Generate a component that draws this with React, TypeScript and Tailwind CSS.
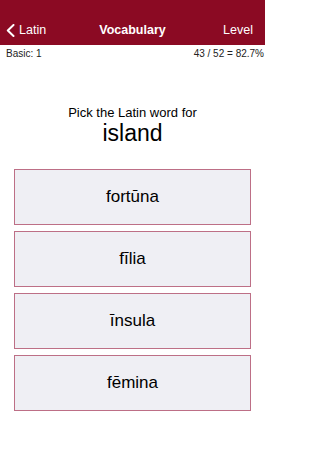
import React from "react";

const words = ["fortūna", "fīlia", "īnsula", "fēmina"];

export default function App() {
  return (
    <div
      className="w-[265px] h-[471px] bg-white overflow-hidden"
      style={{ fontFamily: '"Liberation Sans", Arial, sans-serif' }}
    >
      <div className="h-[45px] bg-[#8b0a23] pt-[15px]">
        <div className="h-[30px] flex items-center justify-between text-white text-[12.5px]">
          <div className="flex items-center pl-[6px] w-[80px]">
            <svg width="9" height="13" viewBox="0 0 9 13" className="mr-[4px]">
              <polyline
                points="7.5,1 1.8,6.5 7.5,12"
                fill="none"
                stroke="white"
                strokeWidth="2"
                strokeLinecap="round"
                strokeLinejoin="round"
              />
            </svg>
            <span>Latin</span>
          </div>
          <div className="font-bold">Vocabulary</div>
          <div className="w-[80px] text-right pr-[12px]">Level</div>
        </div>
      </div>
      <div className="h-[16px] flex items-center justify-between text-[10px] text-[#222] pl-[6px] pr-[1px]">
        <span>Basic: 1</span>
        <span>43 / 52 = 82.7%</span>
      </div>
      <div className="mt-[44px] text-center text-black">
        <div className="text-[13px] leading-[16px]">Pick the Latin word for</div>
        <div className="text-[23px] leading-[24px]">island</div>
      </div>
      <div className="mt-[24px] px-[14px] flex flex-col gap-[6px]">
        {words.map((w) => (
          <div
            key={w}
            className="h-[56px] border border-[#bd6f86] bg-[#efeff4] flex items-center justify-center text-[17px] text-black"
          >
            {w}
          </div>
        ))}
      </div>
    </div>
  );
}
